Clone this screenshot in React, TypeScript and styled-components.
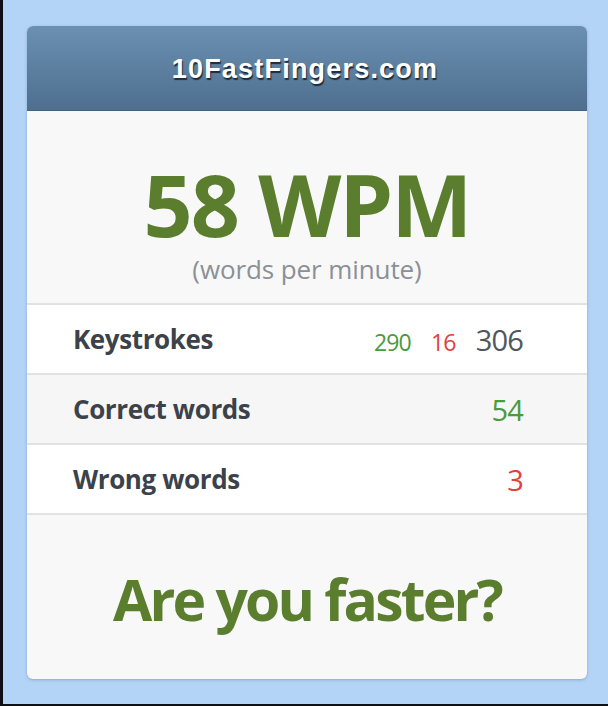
import React from "react";
import styled, { createGlobalStyle } from "styled-components";

const Global = createGlobalStyle`
  html, body { margin: 0; padding: 0; background: #b3d3f7; }
  * { box-sizing: border-box; }
`;

const Frame = styled.div`
  width: 608px;
  height: 706px;
  background: #b3d3f7;
  border-left: 3px solid #0d1014;
  border-bottom: 2px solid #0d1014;
  padding: 26px 21px 0 24px;
  font-family: "Open Sans", "Noto Sans", sans-serif;
`;

const Card = styled.div`
  width: 560px;
  height: 653px;
  background: #f8f8f8;
  border-radius: 6px;
  overflow: hidden;
  box-shadow: 0 1px 3px rgba(60, 90, 130, 0.35);
  display: flex;
  flex-direction: column;
`;

const Header = styled.div`
  height: 85px;
  background: linear-gradient(#6b90b2, #4e6f8f);
  border-bottom: 1px solid #44627f;
  display: flex;
  align-items: center;
  justify-content: center;
  padding-top: 2px;
  padding-right: 4px;
`;

const Title = styled.h1`
  margin: 0;
  font-family: "Liberation Sans", Arial, sans-serif;
  font-weight: 700;
  font-size: 27px;
  letter-spacing: 1.2px;
  color: #ffffff;
  text-shadow: 1px 2px 1px #1d2b3a;
`;

const Hero = styled.div`
  height: 194px;
  display: flex;
  flex-direction: column;
  align-items: center;
  padding-top: 53px;
  border-bottom: 2px solid #e2e2e2;
`;

const Wpm = styled.div`
  font-weight: 700;
  font-size: 86px;
  line-height: 80px;
  letter-spacing: -2px;
  color: #5a7e2e;
`;

const Sub = styled.div`
  font-size: 26px;
  line-height: 30px;
  color: #8b9097;
  letter-spacing: -0.1px;
  margin-top: 10px;
`;

const Row = styled.div<{ $alt?: boolean }>`
  height: 70px;
  background: ${(p) => (p.$alt ? "#f6f6f6" : "#ffffff")};
  border-bottom: 2px solid #e2e2e2;
  display: flex;
  align-items: center;
  justify-content: space-between;
  padding: 0 64px 0 46px;
`;

const Label = styled.span`
  font-weight: 700;
  font-size: 26px;
  letter-spacing: -0.4px;
  color: #3b424a;
`;

const Values = styled.span`
  display: flex;
  align-items: baseline;
  gap: 20px;
`;

const Num = styled.span<{ $tone: "green" | "red" | "gray"; $small?: boolean }>`
  font-size: ${(p) => (p.$small ? "23px" : "29px")};
  letter-spacing: -0.8px;
  color: ${(p) =>
    p.$tone === "green" ? "#4b9a3e" : p.$tone === "red" ? "#e1403d" : "#50565d"};
`;

const Footer = styled.div`
  flex: 1;
  display: flex;
  align-items: center;
  justify-content: center;
  padding-top: 4px;
`;

const Cta = styled.div`
  font-weight: 700;
  font-size: 57px;
  letter-spacing: -2.8px;
  color: #5a7e2e;
`;

export default function App() {
  return (
    <>
      <Global />
      <Frame>
        <Card>
          <Header>
            <Title>10FastFingers.com</Title>
          </Header>
          <Hero>
            <Wpm>58 WPM</Wpm>
            <Sub>(words per minute)</Sub>
          </Hero>
          <Row>
            <Label>Keystrokes</Label>
            <Values>
              <Num $tone="green" $small>290</Num>
              <Num $tone="red" $small>16</Num>
              <Num $tone="gray">306</Num>
            </Values>
          </Row>
          <Row $alt>
            <Label>Correct words</Label>
            <Values>
              <Num $tone="green">54</Num>
            </Values>
          </Row>
          <Row>
            <Label>Wrong words</Label>
            <Values>
              <Num $tone="red">3</Num>
            </Values>
          </Row>
          <Footer>
            <Cta>Are you faster?</Cta>
          </Footer>
        </Card>
      </Frame>
    </>
  );
}
